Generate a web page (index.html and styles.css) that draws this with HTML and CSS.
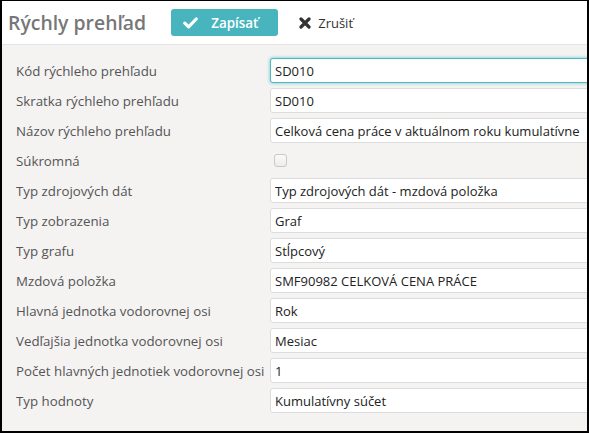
FILE: index.html
```html
<!DOCTYPE html>
<html lang="sk">
<head>
  <meta charset="UTF-8" />
  <title>Rýchly prehľad</title>
  <link rel="stylesheet" href="styles.css">
</head>
<body>
  <div class="window">
    <div class="toolbar">
      <h1>Rýchly prehľad</h1>
      <button class="btn btn-save">
        <svg class="icon" width="15" height="12" viewBox="0 0 15 12"><path d="M1.8 6.2 L5.6 9.8 L13.2 2" fill="none" stroke="#fff" stroke-width="3.2" stroke-linecap="round" stroke-linejoin="round"/></svg>
        Zapísať
      </button>
      <button class="btn btn-cancel">
        <svg class="icon" width="12" height="12" viewBox="0 0 12 12"><path d="M2 2 L10 10 M10 2 L2 10" fill="none" stroke="#333" stroke-width="3.2" stroke-linecap="round"/></svg>
        Zrušiť
      </button>
    </div>

    <form class="form">
      <div class="row">
        <label>Kód rýchleho prehľadu</label>
        <input type="text" class="focused" value="SD010">
      </div>
      <div class="row">
        <label>Skratka rýchleho prehľadu</label>
        <input type="text" value="SD010">
      </div>
      <div class="row">
        <label>Názov rýchleho prehľadu</label>
        <input type="text" value="Celková cena práce v aktuálnom roku kumulatívne">
      </div>
      <div class="row">
        <label>Súkromná</label>
        <span class="checkbox"></span>
      </div>
      <div class="row">
        <label>Typ zdrojových dát</label>
        <input type="text" value="Typ zdrojových dát - mzdová položka">
      </div>
      <div class="row">
        <label>Typ zobrazenia</label>
        <input type="text" value="Graf">
      </div>
      <div class="row">
        <label>Typ grafu</label>
        <input type="text" value="Stĺpcový">
      </div>
      <div class="row">
        <label>Mzdová položka</label>
        <input type="text" value="SMF90982 CELKOVÁ CENA PRÁCE">
      </div>
      <div class="row">
        <label>Hlavná jednotka vodorovnej osi</label>
        <input type="text" value="Rok">
      </div>
      <div class="row">
        <label>Vedľajšia jednotka vodorovnej osi</label>
        <input type="text" value="Mesiac">
      </div>
      <div class="row">
        <label>Počet hlavných jednotiek vodorovnej osi</label>
        <input type="text" value="1">
      </div>
      <div class="row">
        <label>Typ hodnoty</label>
        <input type="text" value="Kumulatívny súčet">
      </div>
    </form>
  </div>
</body>
</html>
```

FILE: styles.css
```css
html, body {
  margin: 0;
  padding: 0;
}

body {
  font-family: 'Open Sans', sans-serif;
  font-size: 13px;
  color: #333;
}

.window {
  width: 589px;
  height: 433px;
  box-sizing: border-box;
  border: 2px solid #000;
  border-top-width: 1px;
  background: #f4f3f2;
  overflow: hidden;
}

.toolbar {
  height: 43px;
  background: #fff;
  border-bottom: 1px solid #e4e4e4;
  display: flex;
  align-items: center;
  padding-left: 6px;
}

.toolbar h1 {
  margin: 0 0 1px 0;
  font-size: 19.4px;
  font-weight: 600;
  color: #777;
}

.btn {
  font-family: inherit;
  font-size: 13px;
  font-weight: 600;
  border: none;
  border-radius: 3px;
  cursor: pointer;
  display: flex;
  align-items: center;
  padding: 0;
}

.btn-save {
  margin-left: 25px;
  width: 107px;
  height: 27px;
  background: #48b5be;
  color: #fff;
  padding-left: 12px;
  gap: 13px;
  font-size: 13.4px;
}

.btn-cancel {
  margin-left: 21px;
  background: none;
  color: #333;
  font-weight: 400;
  height: 27px;
  gap: 7px;
}

.form {
  padding: 13px 0 0 14px;
  display: flex;
  flex-direction: column;
  gap: 5px;
}

.row {
  display: grid;
  grid-template-columns: 254px 340px;
  align-items: center;
  height: 25px;
}

.row label {
  color: #555;
  white-space: nowrap;
  font-size: 13.3px;
}

.row input {
  font-family: inherit;
  font-size: 13px;
  color: #222;
  height: 25px;
  box-sizing: border-box;
  border: 1px solid #dcdcdc;
  border-radius: 3px;
  background: #fff;
  padding: 0 4px;
  outline: none;
}

.row input.focused {
  border-color: #4fb8c1;
  box-shadow: 0 0 3px 1px #9fd8dd;
}

.checkbox {
  width: 11px;
  height: 11px;
  margin-left: 4px;
  border: 1px solid #c8c8c8;
  border-radius: 3px;
  background: linear-gradient(to bottom, #fafafa, #ececec);
}
```
